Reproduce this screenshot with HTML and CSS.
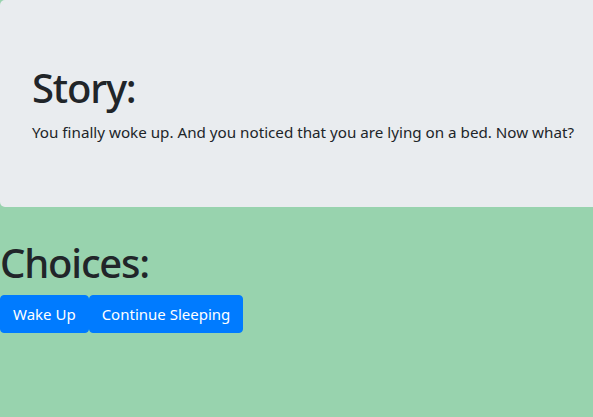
FILE: index.html
```html
<!DOCTYPE html>
<html>
<head>
<meta charset="utf-8">
<link rel="stylesheet" href="styles.css">
</head>
<body>
<div class="jumbotron">
  <h1 class="title">Story:</h1>
  <p class="story">You finally woke up. And you noticed that you are lying on a bed. Now what?</p>
</div>
<h1 class="title">Choices:</h1>
<div class="choices">
  <button class="btn">Wake Up</button>
  <button class="btn">Continue Sleeping</button>
</div>
</body>
</html>
```

FILE: styles.css
```css
html, body {
  margin: 0;
  padding: 0;
}
body {
  background: #98d3ae;
  font-family: "Noto Sans", "Open Sans", sans-serif;
  color: #212529;
  font-size: 15px;
  line-height: 24px;
}
.jumbotron {
  background: #e9ecef;
  padding: 64px 20px 63px 32px;
  border-radius: 5px 0 0 5px;
  margin-bottom: 32px;
}
.title {
  font-size: 40px;
  font-weight: 500;
  letter-spacing: -1.2px;
  line-height: 48px;
  margin: 0 0 8px;
}
.story {
  margin: 0;
  font-size: 15.2px;
  white-space: nowrap;
}
.choices {
  display: flex;
}
.btn {
  font-family: inherit;
  font-size: 15px;
  line-height: 24px;
  padding: 6px 12px;
  height: 38px;
  border: 1px solid #007bff;
  background: #007bff;
  color: #fff;
  border-radius: 4px;
  margin: 0;
}
```
